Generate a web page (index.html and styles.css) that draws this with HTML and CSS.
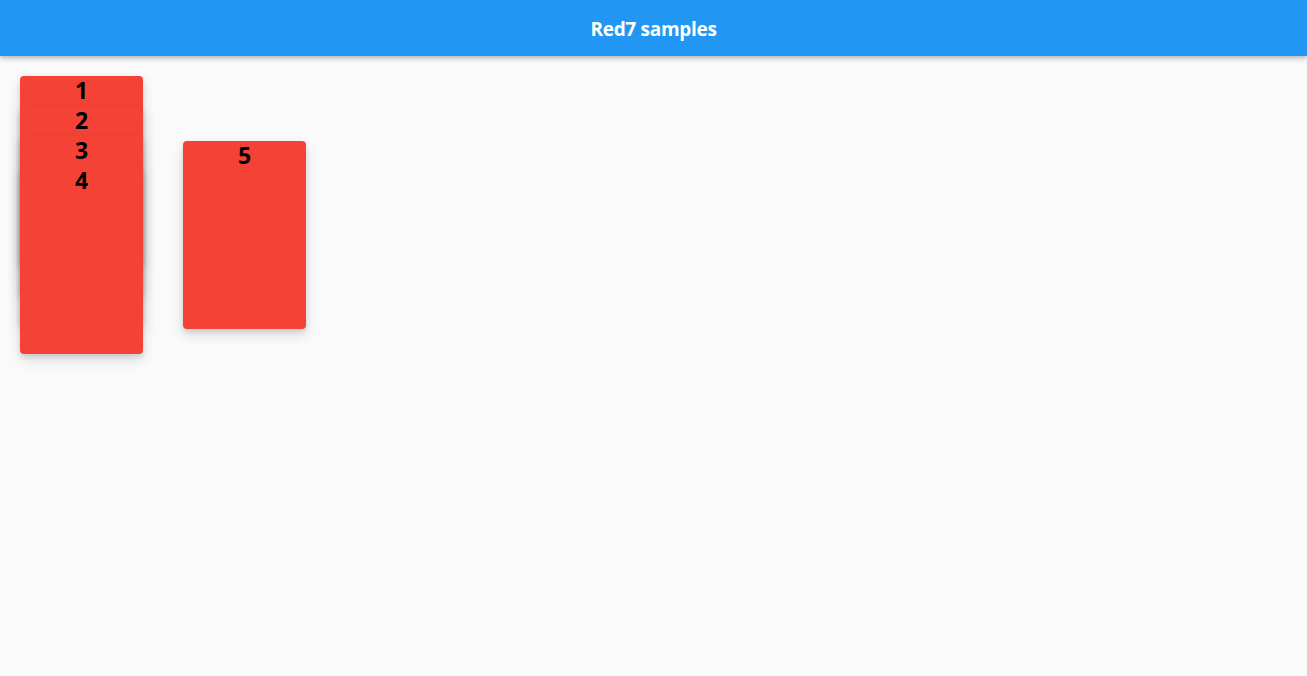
FILE: index.html
```html
<!DOCTYPE html>
<html>
<head>
<meta charset="utf-8">
<link rel="stylesheet" href="styles.css">
</head>
<body>
<header class="appbar"><h1 class="title">Red7 samples</h1></header>
<main class="board">
  <div class="stack">
    <div class="card"><span class="num">1</span></div>
    <div class="card"><span class="num">2</span></div>
    <div class="card"><span class="num">3</span></div>
    <div class="card"><span class="num">4</span></div>
  </div>
  <div class="single">
    <div class="card"><span class="num">5</span></div>
  </div>
</main>
</body>
</html>
```
FILE: styles.css
```css
* { box-sizing: border-box; }
html, body { margin: 0; height: 100%; }
body {
  background: #fafafa;
  font-family: "Open Sans", "Noto Sans", sans-serif;
  overflow: hidden;
}
.appbar {
  position: relative;
  z-index: 2;
  height: 56px;
  padding-top: 2px;
  background: #2196f3;
  display: flex;
  align-items: center;
  justify-content: center;
  box-shadow: 0 2px 4px rgba(0,0,0,0.2), 0 4px 6px rgba(0,0,0,0.08);
}
.title {
  margin: 0;
  color: #fff;
  font-size: 19px;
  font-weight: 700;
  letter-spacing: -0.3px;
}
.board {
  display: flex;
  align-items: flex-start;
  gap: 40px;
  padding: 20px;
}
.stack, .single {
  display: flex;
  flex-direction: column;
  width: 123px;
}
.single { margin-top: 65px; }
.card {
  width: 123px;
  height: 188px;
  flex: none;
  background: #f44336;
  border-radius: 4px;
  box-shadow: 0 3px 5px rgba(0,0,0,0.1), 0 6px 14px rgba(0,0,0,0.12);
  display: flex;
  justify-content: center;
  align-items: flex-start;
}
.stack .card + .card { margin-top: -158px; }
.num {
  font-size: 23px;
  font-weight: 700;
  line-height: 28px;
  color: #000;
}
```
